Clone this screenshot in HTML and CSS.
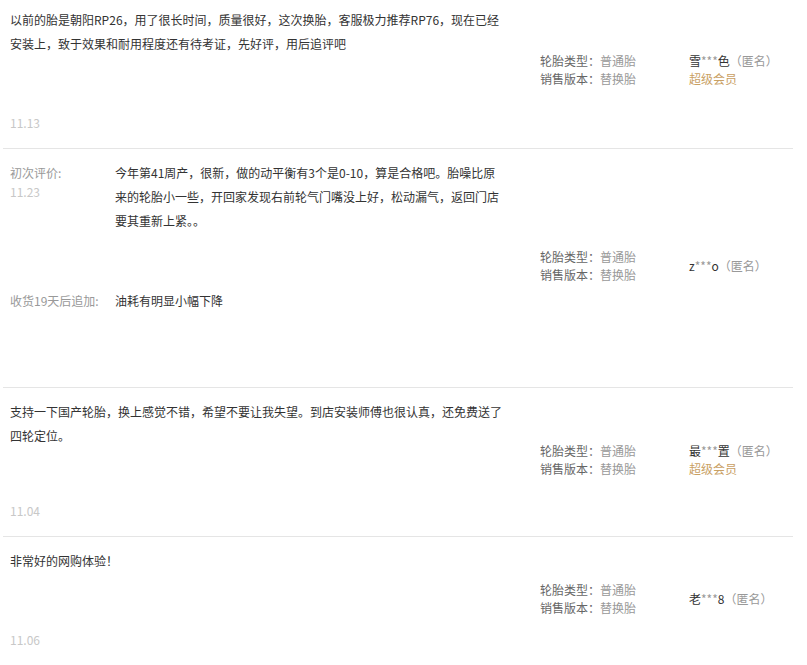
FILE: index.html
```html
<!DOCTYPE html>
<html lang="zh-CN">
<head>
<meta charset="utf-8">
<title>评价</title>
<link rel="stylesheet" href="styles.css">
</head>
<body>
<div class="list">
  <div class="item">
    <div class="main">
      <p class="text">以前的胎是朝阳RP26，用了很长时间，质量很好，这次换胎，客服极力推荐RP76，现在已经安装上，致于效果和耐用程度还有待考证，先好评，用后追评吧</p>
      <div class="date">11.13</div>
    </div>
    <div class="info">
      <div><span class="k">轮胎类型：</span><span class="v">普通胎</span></div>
      <div><span class="k">销售版本：</span><span class="v">替换胎</span></div>
    </div>
    <div class="user">
      <div class="name">雪<span class="star">***</span>色<span class="anon">（匿名）</span></div>
      <div class="vip">超级会员</div>
    </div>
  </div>

  <div class="item">
    <div class="main">
      <div class="block first">
        <div class="label">
          <div class="label-t">初次评价:</div>
          <div class="label-d">11.23</div>
        </div>
        <p class="text narrow">今年第41周产，很新，做的动平衡有3个是0-10，算是合格吧。胎噪比原来的轮胎小一些，开回家发现右前轮气门嘴没上好，松动漏气，返回门店要其重新上紧。。</p>
      </div>
      <div class="block last">
        <div class="label">
          <div class="label-t">收货19天后追加:</div>
        </div>
        <p class="text narrow">油耗有明显小幅下降</p>
      </div>
    </div>
    <div class="info">
      <div><span class="k">轮胎类型：</span><span class="v">普通胎</span></div>
      <div><span class="k">销售版本：</span><span class="v">替换胎</span></div>
    </div>
    <div class="user">
      <div class="name">z<span class="star">***</span>o<span class="anon">（匿名）</span></div>
    </div>
  </div>

  <div class="item tight">
    <div class="main">
      <p class="text">支持一下国产轮胎，换上感觉不错，希望不要让我失望。到店安装师傅也很认真，还免费送了四轮定位。</p>
      <div class="date">11.04</div>
    </div>
    <div class="info">
      <div><span class="k">轮胎类型：</span><span class="v">普通胎</span></div>
      <div><span class="k">销售版本：</span><span class="v">替换胎</span></div>
    </div>
    <div class="user">
      <div class="name">最<span class="star">***</span>置<span class="anon">（匿名）</span></div>
      <div class="vip">超级会员</div>
    </div>
  </div>

  <div class="item">
    <div class="main">
      <p class="text">非常好的网购体验！</p>
      <div class="date">11.06</div>
    </div>
    <div class="info">
      <div><span class="k">轮胎类型：</span><span class="v">普通胎</span></div>
      <div><span class="k">销售版本：</span><span class="v">替换胎</span></div>
    </div>
    <div class="user">
      <div class="name">老<span class="star">***</span>8<span class="anon">（匿名）</span></div>
    </div>
  </div>
</div>
</body>
</html>
```

FILE: styles.css
```css
html, body {
  margin: 0;
  padding: 0;
  background: #fff;
}
body {
  font-family: "Noto Sans CJK SC", "Noto Sans", sans-serif;
  font-size: 12px;
  color: #333;
  overflow: hidden;
}
.list {
  margin: -4px 0 0 3px;
  width: 790px;
}
.item {
  display: flex;
  align-items: center;
  padding: 12px 0 16px 7px;
  border-bottom: 1px solid #e5e5e5;
}
.main {
  width: 500px;
  margin-right: 30px;
  flex: none;
}
.text {
  margin: 0 0 58px 0;
  line-height: 24px;
}
.item.tight .text {
  margin-bottom: 54px;
}
.date {
  line-height: 18px;
  color: #c8c8c8;
}
.block {
  display: flex;
}
.block.first .text {
  margin-bottom: 56px;
}
.block.last .text {
  margin-bottom: 58px;
}
.label {
  width: 105px;
  flex: none;
  color: #999;
}
.label-t {
  line-height: 24px;
}
.label-d {
  line-height: 14px;
  color: #c8c8c8;
}
.narrow {
  width: 390px;
}
.info {
  width: 149px;
  flex: none;
  line-height: 18px;
}
.k {
  color: #666;
}
.v {
  color: #999;
}
.user {
  flex: 1;
  line-height: 18px;
}
.name {
  color: #333;
}
.star {
  color: #999;
}
.anon {
  color: #999;
}
.vip {
  color: #c9a063;
}
```
